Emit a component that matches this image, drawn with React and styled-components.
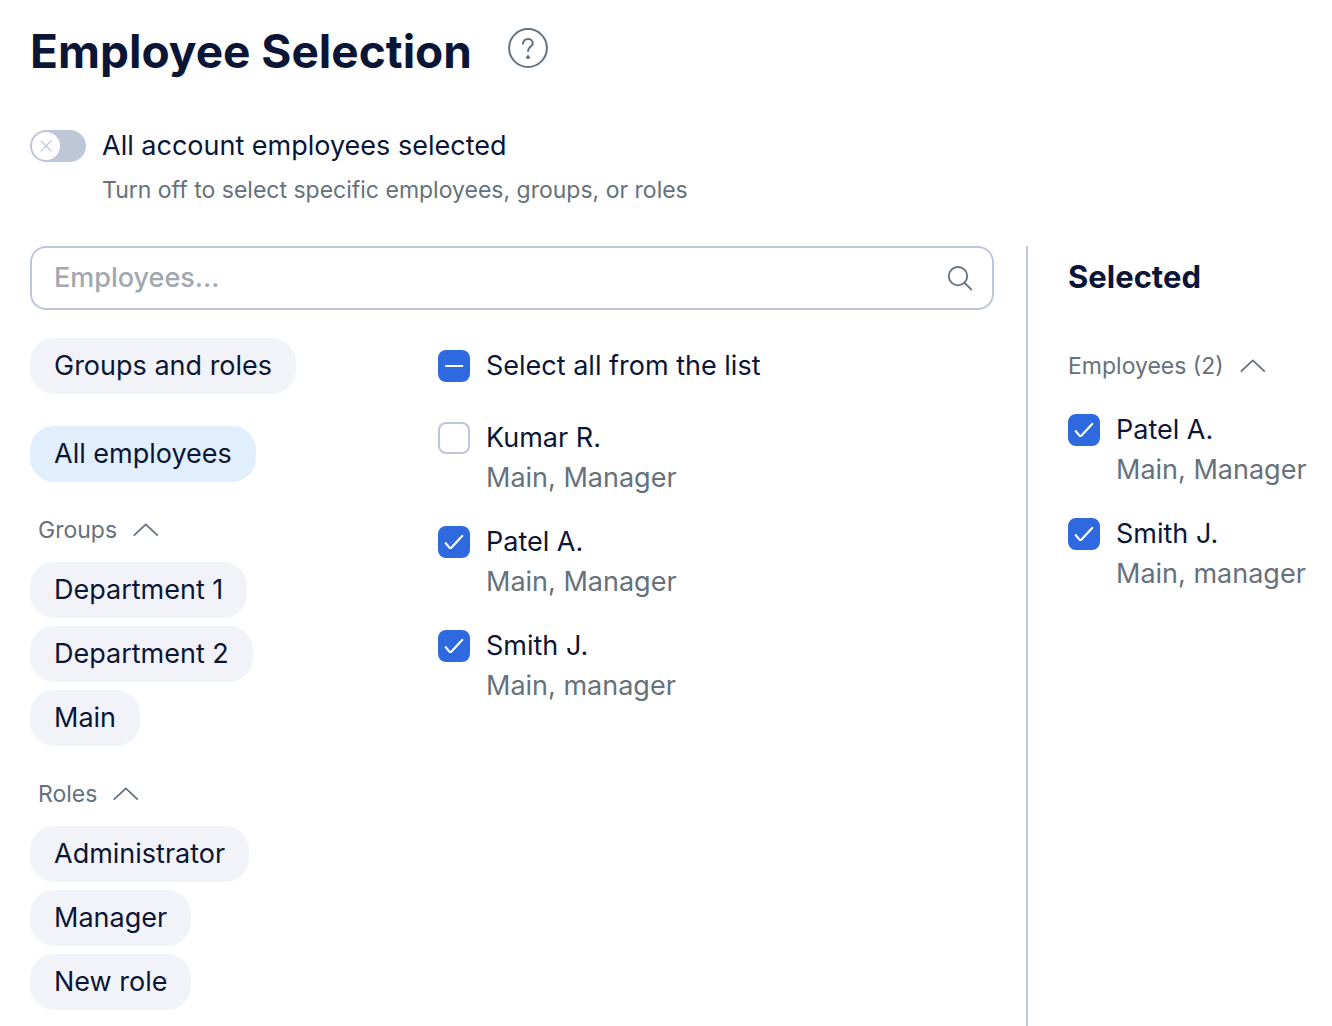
import React, { useState } from "react";
import styled, { createGlobalStyle } from "styled-components";

const GlobalStyle = createGlobalStyle`
  *,
  *::before,
  *::after {
    box-sizing: border-box;
  }

  body {
    margin: 0;
    background-color: #ffffff;
    color: #0b1637; /* Primary Text Color */
    font-family: Inter, "Liberation Sans", sans-serif;
    font-size: 27px;
    line-height: 40px;
  }

  button,
  input {
    font: inherit;
    color: inherit;
  }
`;

const Page = styled.div`
  display: flex;
  flex-direction: column;
  min-height: 100vh;
  padding: 20px 28px 0 30px;
`;

const Header = styled.header`
  display: flex;
  align-items: flex-start;
  gap: 36px;
`;

const Title = styled.h1`
  margin: 0;
  font-size: 46px;
  font-weight: 700;
  line-height: 62px;
`;

const HelpButton = styled.button`
  display: flex;
  margin: 8px 0 0;
  padding: 0;
  border: none;
  background: none;
  color: #66717c; /* Secondary Text Color */
  cursor: pointer;
`;

const ToggleRow = styled.div`
  display: flex;
  gap: 16px;
  margin-top: 44px;
`;

const Switch = styled.span`
  display: grid;
  flex: none;
  width: 56px;
  height: 32px;
  margin-top: 4px;

  > * {
    grid-area: 1 / 1;
  }

  svg {
    align-self: center;
    margin-left: ${(props) => (props.$on ? "26px" : "2px")};
    pointer-events: none;
  }
`;

const SwitchInput = styled.input`
  appearance: none;
  width: 56px;
  height: 32px;
  margin: 0;
  border-radius: 16px;
  background-color: #bfc6d8;
  cursor: pointer;

  &:checked {
    background-color: #2e69df; /* Accent Color */
  }
`;

const ToggleText = styled.div`
  display: flex;
  flex-direction: column;
  gap: 4px;
`;

const Hint = styled.span`
  color: #66717c;
  font-size: 23px;
`;

const Layout = styled.div`
  display: grid;
  flex: 1;
  grid-template-columns: minmax(0, 1fr) 278px;
  gap: 32px;
  margin-top: 36px;
`;

const Main = styled.main`
  padding-bottom: 16px;
`;

const SearchBox = styled.label`
  display: flex;
  align-items: center;
  height: 64px;
  padding: 0 18px 0 22px;
  border: 2px solid #bfc6d8;
  border-radius: 16px;
  color: #66717c;
`;

const SearchInput = styled.input`
  flex: 1;
  min-width: 0;
  padding: 0;
  border: none;
  outline: none;
  background: none;
  color: #0b1637;

  &::placeholder {
    color: #a1a8af;
    font-weight: 500;
    opacity: 1;
  }
`;

const Columns = styled.div`
  display: grid;
  grid-template-columns: 408px minmax(0, 1fr);
  margin-top: 28px;
`;

const Filters = styled.nav`
  display: flex;
  flex-direction: column;
  align-items: flex-start;
  gap: 32px;
`;

const FilterGroups = styled.div`
  display: flex;
  flex-direction: column;
  align-items: flex-start;
  gap: 16px;
`;

const Group = styled.section`
  display: flex;
  flex-direction: column;
  align-items: flex-start;
`;

const PillList = styled.div`
  display: flex;
  flex-direction: column;
  align-items: flex-start;
  gap: 8px;
`;

const Pill = styled.button`
  height: 56px;
  padding: 0 24px;
  border: none;
  border-radius: 24px;
  background-color: ${(props) => (props.$active ? "#e1effd" : "#f2f3f9")};
  cursor: pointer;
`;

const GroupToggle = styled.button`
  display: flex;
  align-items: center;
  gap: 12px;
  height: 64px;
  padding: 0 ${(props) => (props.$inset ? "8px" : "0")};
  border: none;
  background: none;
  color: #66717c;
  font-size: 23px;
  cursor: pointer;

  svg {
    transform: ${(props) => (props.$open ? "none" : "rotate(180deg)")};
  }
`;

const PeoplePanel = styled.div`
  display: flex;
  flex-direction: column;
  gap: 32px;
  padding-top: 8px;
`;

const PeopleList = styled.div`
  display: flex;
  flex-direction: column;
  gap: 24px;
`;

const PersonRow = styled.label`
  display: flex;
  gap: 16px;
  cursor: pointer;
`;

const PersonText = styled.span`
  display: flex;
  flex-direction: column;
  white-space: nowrap;
`;

const PersonRole = styled.span`
  color: #66717c;
`;

const Check = styled.span`
  display: grid;
  flex: none;
  width: 32px;
  height: 32px;
  margin-top: 4px;

  > * {
    grid-area: 1 / 1;
  }

  svg {
    pointer-events: none;
  }
`;

const CheckInput = styled.input`
  appearance: none;
  width: 32px;
  height: 32px;
  margin: 0;
  border: 2px solid #bfc6d8;
  border-radius: 8px;
  background-color: #ffffff;
  cursor: pointer;

  &:checked,
  &:indeterminate {
    border-color: #2e69df;
    background-color: #2e69df;
  }
`;

const Aside = styled.aside`
  padding-left: 40px;
  border-left: 2px solid #bfc6d8;
`;

const AsideTitle = styled.h2`
  margin: 0 0 26px;
  font-size: 31px;
  font-weight: 700;
  line-height: 62px;
`;

const AsideList = styled(PeopleList)`
  margin-top: 12px;
`;

const employees = [
  { id: 1, name: "Kumar R.", role: "Main, Manager" },
  { id: 2, name: "Patel A.", role: "Main, Manager" },
  { id: 3, name: "Smith J.", role: "Main, manager" },
];

const filterGroups = [
  { title: "Groups", items: ["Department 1", "Department 2", "Main"] },
  { title: "Roles", items: ["Administrator", "Manager", "New role"] },
];

function Chevron() {
  return (
    <svg width="32" height="32" viewBox="0 0 32 32" fill="none" stroke="currentColor" strokeWidth="1.8">
      <path d="M4.8 21.6 L16.8 10.4 L28.8 21.6" strokeLinejoin="round" />
    </svg>
  );
}

function Checkbox({ checked, mixed, onChange }) {
  return (
    <Check>
      <CheckInput
        type="checkbox"
        checked={checked}
        onChange={onChange}
        ref={(el) => {
          if (el) el.indeterminate = Boolean(mixed);
        }}
      />
      <svg
        width="32"
        height="32"
        viewBox="0 0 32 32"
        fill="none"
        stroke="#ffffff"
        strokeWidth="2.2"
        strokeLinecap="round"
        strokeLinejoin="round"
      >
        {mixed && <path d="M8 16 H24.3" />}
        {checked && !mixed && <path d="M7.8 17.2 L11.3 21.4 Q12.4 22.6 13.5 21.4 L24.2 9.9" />}
      </svg>
    </Check>
  );
}

function Person({ person, checked, onChange }) {
  return (
    <PersonRow>
      <Checkbox checked={checked} onChange={onChange} />
      <PersonText>
        <span>{person.name}</span>
        <PersonRole>{person.role}</PersonRole>
      </PersonText>
    </PersonRow>
  );
}

function CollapsibleGroup({ title, inset, children }) {
  const [open, setOpen] = useState(true);

  return (
    <Group>
      <GroupToggle
        type="button"
        $inset={inset}
        $open={open}
        aria-expanded={open}
        onClick={() => setOpen(!open)}
      >
        {title}
        <Chevron />
      </GroupToggle>
      {open && children}
    </Group>
  );
}

function App() {
  const [allSelected, setAllSelected] = useState(false);
  const [query, setQuery] = useState("");
  const [filter, setFilter] = useState("All employees");
  const [selected, setSelected] = useState([2, 3]);

  const toggleEmployee = (id) => {
    if (selected.includes(id)) {
      setSelected(selected.filter((item) => item !== id));
    } else {
      setSelected([...selected, id]);
    }
  };

  const handleSelectAll = () => {
    const everyone = selected.length === employees.length;
    setSelected(everyone ? [] : employees.map((person) => person.id));
  };

  const visible = employees.filter((person) =>
    person.name.toLowerCase().includes(query.toLowerCase())
  );
  const chosen = employees.filter((person) => selected.includes(person.id));

  const renderPill = (name) => (
    <Pill
      key={name}
      type="button"
      $active={filter === name}
      onClick={() => setFilter(name)}
    >
      {name}
    </Pill>
  );

  return (
    <>
      <GlobalStyle />
      <Page>
        <Header>
          <Title>Employee Selection</Title>
          <HelpButton type="button" aria-label="Help">
            <svg width="40" height="40" viewBox="0 0 40 40" fill="none" stroke="currentColor" strokeWidth="2">
              <circle cx="20" cy="20" r="18.9" />
              <path
                d="M15 15.8 C15 12.8 17.2 11 19.9 11 C22.7 11 24.8 12.8 24.8 15.4 C24.8 18.6 20 18.8 20 23"
                strokeLinecap="round"
              />
              <circle cx="20" cy="29.2" r="1.9" fill="currentColor" stroke="none" />
            </svg>
          </HelpButton>
        </Header>

        <ToggleRow>
          <Switch $on={allSelected}>
            <SwitchInput
              id="all-employees"
              type="checkbox"
              role="switch"
              checked={allSelected}
              onChange={(e) => setAllSelected(e.target.checked)}
            />
            <svg width="28" height="28" viewBox="0 0 28 28" fill="none" stroke="#bfc6d8" strokeWidth="1.3">
              <circle cx="14" cy="14" r="14" fill="#ffffff" stroke="none" />
              <path d="M8.8 8.6 L19.4 19.4 M19.4 8.6 L8.8 19.4" />
            </svg>
          </Switch>
          <ToggleText>
            <label htmlFor="all-employees">All account employees selected</label>
            <Hint>Turn off to select specific employees, groups, or roles</Hint>
          </ToggleText>
        </ToggleRow>

        <Layout>
          <Main>
            <SearchBox>
              <SearchInput
                type="text"
                placeholder="Employees..."
                aria-label="Employees"
                value={query}
                onChange={(e) => setQuery(e.target.value)}
              />
              <svg width="28" height="28" viewBox="0 0 28 28" fill="none" stroke="currentColor" strokeWidth="1.8">
                <circle cx="12" cy="12.2" r="9.2" />
                <path d="M18.6 18.8 L25.8 26" />
              </svg>
            </SearchBox>

            <Columns>
              <Filters>
                {renderPill("Groups and roles")}
                <FilterGroups>
                  {renderPill("All employees")}
                  {filterGroups.map((group) => (
                    <CollapsibleGroup key={group.title} title={group.title} inset>
                      <PillList>{group.items.map(renderPill)}</PillList>
                    </CollapsibleGroup>
                  ))}
                </FilterGroups>
              </Filters>

              <PeoplePanel>
                <PersonRow>
                  <Checkbox
                    checked={selected.length === employees.length}
                    mixed={selected.length > 0 && selected.length < employees.length}
                    onChange={handleSelectAll}
                  />
                  <span>Select all from the list</span>
                </PersonRow>
                <PeopleList>
                  {visible.map((person) => (
                    <Person
                      key={person.id}
                      person={person}
                      checked={selected.includes(person.id)}
                      onChange={() => toggleEmployee(person.id)}
                    />
                  ))}
                </PeopleList>
              </PeoplePanel>
            </Columns>
          </Main>

          <Aside>
            <AsideTitle>Selected</AsideTitle>
            <CollapsibleGroup title={`Employees (${chosen.length})`}>
              <AsideList>
                {chosen.map((person) => (
                  <Person
                    key={person.id}
                    person={person}
                    checked
                    onChange={() => toggleEmployee(person.id)}
                  />
                ))}
              </AsideList>
            </CollapsibleGroup>
          </Aside>
        </Layout>
      </Page>
    </>
  );
}

export default App;
